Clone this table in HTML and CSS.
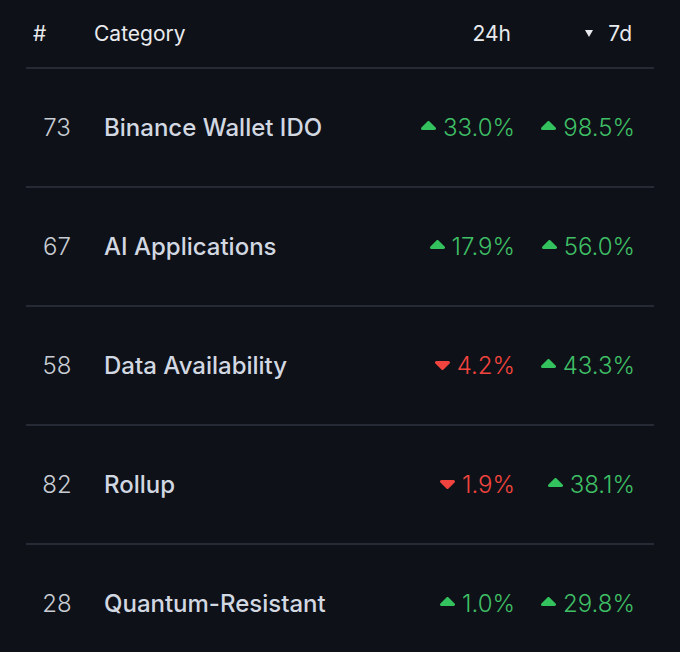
FILE: index.html
```html
<!DOCTYPE html>
<html>
<head>
<meta charset="utf-8">
<link rel="stylesheet" href="styles.css">
</head>
<body>
<div class="table">
  <div class="head">
    <div class="h-rank">#</div>
    <div class="h-cat">Category</div>
    <div class="h-val">24h</div>
    <div class="h-val h-sort"><span class="sort-tri"></span>7d</div>
  </div>
  <div class="row">
    <div class="rank">73</div>
    <div class="name">Binance Wallet IDO</div>
    <div class="val up"><svg class="tri" viewBox="0 0 15 9"><path d="M7.5 1.5 L13.5 7.5 L1.5 7.5 Z"/></svg>33.0%</div>
    <div class="val up"><svg class="tri" viewBox="0 0 15 9"><path d="M7.5 1.5 L13.5 7.5 L1.5 7.5 Z"/></svg>98.5%</div>
  </div>
  <div class="row">
    <div class="rank">67</div>
    <div class="name">AI Applications</div>
    <div class="val up"><svg class="tri" viewBox="0 0 15 9"><path d="M7.5 1.5 L13.5 7.5 L1.5 7.5 Z"/></svg>17.9%</div>
    <div class="val up"><svg class="tri" viewBox="0 0 15 9"><path d="M7.5 1.5 L13.5 7.5 L1.5 7.5 Z"/></svg>56.0%</div>
  </div>
  <div class="row">
    <div class="rank">58</div>
    <div class="name">Data Availability</div>
    <div class="val down"><svg class="tri" viewBox="0 0 15 9"><path d="M1.5 1.5 L13.5 1.5 L7.5 7.5 Z"/></svg>4.2%</div>
    <div class="val up"><svg class="tri" viewBox="0 0 15 9"><path d="M7.5 1.5 L13.5 7.5 L1.5 7.5 Z"/></svg>43.3%</div>
  </div>
  <div class="row">
    <div class="rank">82</div>
    <div class="name">Rollup</div>
    <div class="val down"><svg class="tri" viewBox="0 0 15 9"><path d="M1.5 1.5 L13.5 1.5 L7.5 7.5 Z"/></svg>1.9%</div>
    <div class="val up"><svg class="tri" viewBox="0 0 15 9"><path d="M7.5 1.5 L13.5 7.5 L1.5 7.5 Z"/></svg>38.1%</div>
  </div>
  <div class="row last">
    <div class="rank">28</div>
    <div class="name">Quantum-Resistant</div>
    <div class="val up"><svg class="tri" viewBox="0 0 15 9"><path d="M7.5 1.5 L13.5 7.5 L1.5 7.5 Z"/></svg>1.0%</div>
    <div class="val up"><svg class="tri" viewBox="0 0 15 9"><path d="M7.5 1.5 L13.5 7.5 L1.5 7.5 Z"/></svg>29.8%</div>
  </div>
</div>
</body>
</html>
```

FILE: styles.css
```css
html, body {
  margin: 0;
  padding: 0;
  background: #0e1117;
}
body {
  font-family: Inter, "Noto Sans", sans-serif;
  width: 680px;
  height: 652px;
  overflow: hidden;
}
.table {
  margin: 0 26px;
}
.head {
  display: flex;
  align-items: center;
  height: 67px;
  border-bottom: 2px solid #252a34;
  color: #e8eaee;
  font-size: 21px;
  font-weight: 400;
}
.h-rank {
  width: 68px;
  padding-left: 7px;
  box-sizing: border-box;
}
.h-cat {
  flex: 1;
}
.h-val {
  width: 120px;
  padding-right: 23px;
  box-sizing: border-box;
  display: flex;
  justify-content: flex-end;
  align-items: center;
}
.h-sort {
  padding-right: 22px;
}
.sort-tri {
  width: 0;
  height: 0;
  border-left: 4px solid transparent;
  border-right: 4px solid transparent;
  border-top: 7px solid #e8eaee;
  margin-right: 15px;
}
.row {
  display: flex;
  align-items: center;
  height: 117px;
  border-bottom: 2px solid #252a34;
  font-size: 24px;
}
.row.last {
  border-bottom: none;
}
.rank {
  width: 62px;
  text-align: center;
  color: #c8ccd3;
  font-weight: 300;
  margin-right: 16px;
}
.name {
  flex: 1;
  color: #d2d8e2;
  font-weight: 500;
}
.val {
  width: 120px;
  padding-right: 19px;
  box-sizing: border-box;
  display: flex;
  justify-content: flex-end;
  align-items: center;
  font-weight: 300;
}
.val.up {
  color: #3fbf66;
}
.val.down {
  color: #f2443e;
}
.tri {
  width: 15px;
  height: 9px;
  margin-right: 7px;
  flex: none;
}
.tri path {
  stroke-width: 3;
  stroke-linejoin: round;
}
.up .tri {
  margin-top: -4px;
}
.up .tri path {
  fill: #33c25d;
  stroke: #33c25d;
}
.down .tri {
  margin-top: 0;
}
.down .tri path {
  fill: #f2443e;
  stroke: #f2443e;
}
```
